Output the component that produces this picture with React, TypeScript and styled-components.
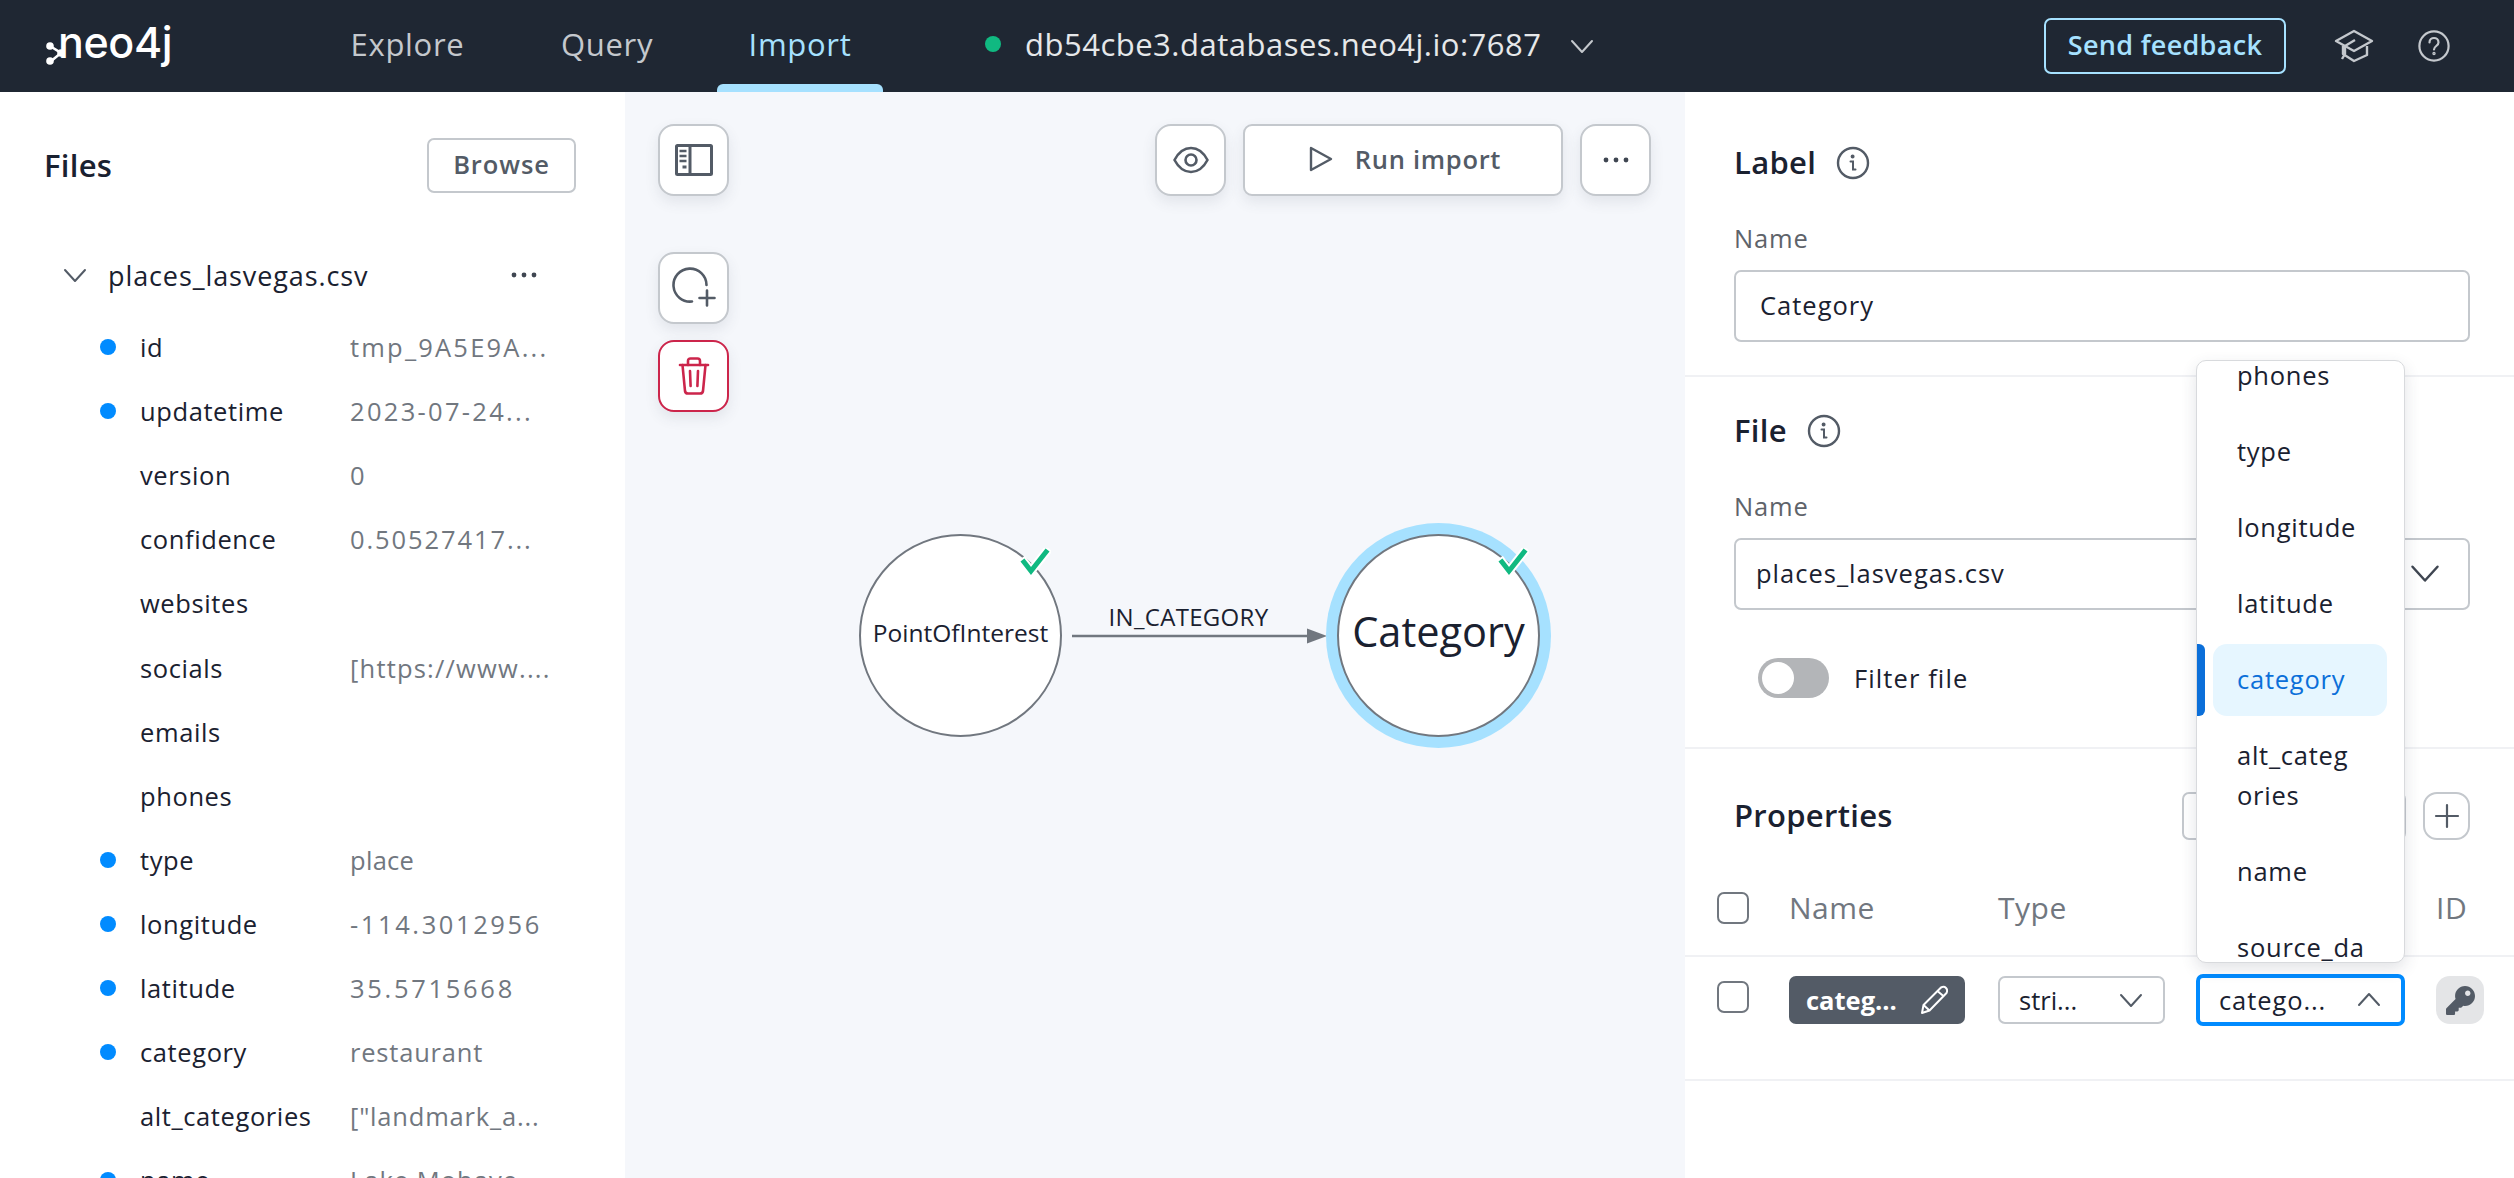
import styled, { createGlobalStyle } from 'styled-components';
import { FaKey } from 'react-icons/fa';

const FONT = '"Open Sans", "Noto Sans", sans-serif';

const GlobalStyle = createGlobalStyle`
  html, body {
    margin: 0;
    height: 100%;
    background: #fff;
  }
  body {
    font-family: ${FONT};
    color: #1a2130;
    overflow: hidden;
  }
  * {
    box-sizing: border-box;
  }
`;

const Page = styled.div`
  width: 2514px;
  height: 1178px;
  display: flex;
  flex-direction: column;
  overflow: hidden;
`;

// top bar
const Header = styled.header`
  height: 92px;
  flex: none;
  background: #1f2733;
  display: flex;
  align-items: center;
  padding-right: 64px;
`;

const LogoWrap = styled.div`
  width: 318px;
  padding-left: 45px;
  display: flex;
  align-items: center;
  color: #fff;
`;

const LogoMark = styled.svg`
  flex: none;
  margin-right: -9px;
  margin-top: 12px;
`;

const LogoText = styled.span`
  font-family: "Inter", sans-serif;
  font-size: 43px;
  line-height: 44px;
  font-weight: 500;
  letter-spacing: -0.4px;
  padding-bottom: 8px;
`;

const Nav = styled.nav`
  display: flex;
  align-items: stretch;
  height: 100%;
  gap: 32px;
`;

const NavItem = styled.a<{ $width: number; $active?: boolean }>`
  position: relative;
  width: ${({ $width }) => $width}px;
  display: flex;
  align-items: center;
  justify-content: center;
  padding-bottom: 5px;
  font-size: 31px;
  letter-spacing: 0.7px;
  color: ${({ $active }) => ($active ? '#a6e1ff' : '#c4c8cd')};

  ${({ $active }) => $active && `
    &::after {
      content: '';
      position: absolute;
      left: 0;
      right: 0;
      bottom: 0;
      height: 8px;
      background: #a6e1ff;
      border-radius: 6px 6px 0 0;
    }
  `}
`;

const Connection = styled.div`
  margin-left: 102px;
  display: flex;
  align-items: center;
  padding-bottom: 5px;
  font-size: 31px;
  letter-spacing: 0.5px;
  color: #e6e8ea;
`;

const StatusDot = styled.span`
  width: 16px;
  height: 16px;
  border-radius: 50%;
  background: #10b981;
  margin-right: 24px;
`;

const ConnChevron = styled.span`
  display: flex;
  margin-left: 28px;
  margin-top: 4px;
`;

const HeaderRight = styled.div`
  margin-left: auto;
  display: flex;
  align-items: center;
`;

const FeedbackButton = styled.button`
  width: 242px;
  height: 56px;
  border: 2.5px solid #a6e1ff;
  border-radius: 7px;
  background: transparent;
  color: #a6e1ff;
  font-family: ${FONT};
  font-size: 27px;
  font-weight: 600;
  letter-spacing: 0.3px;
  padding: 0 0 3px;
`;

const CapIcon = styled.svg`
  margin-left: 48px;
  display: block;
`;

const HelpIcon = styled.svg`
  margin-left: 44px;
  display: block;
`;

// main columns
const Main = styled.div`
  flex: 1;
  min-height: 0;
  display: flex;
`;

const FilesPanel = styled.aside`
  width: 625px;
  flex: none;
  padding: 46px 49px 0 44px;
  overflow: hidden;
`;

const FilesTitleRow = styled.div`
  display: flex;
  align-items: center;
  justify-content: space-between;
  height: 55px;
`;

const PanelTitle = styled.h2`
  margin: 0 0 2px;
  font-size: 31px;
  line-height: 32px;
  font-weight: 600;
  letter-spacing: 0.3px;
  color: #1a2130;
`;

const BrowseButton = styled.button`
  width: 149px;
  height: 55px;
  border: 2px solid #c4c8cd;
  border-radius: 7px;
  background: #fff;
  color: #535b66;
  font-family: ${FONT};
  font-size: 25.5px;
  font-weight: 600;
  letter-spacing: 0.9px;
  padding: 0 0 3px;
`;

const FileName = styled.div`
  margin-top: 50px;
  margin-bottom: 8px;
  height: 64px;
  display: flex;
  align-items: center;
  padding-left: 19px;
  font-size: 27px;
  font-weight: 500;
  letter-spacing: 0.9px;
`;

const FileNameText = styled.span`
  margin-left: 21px;
  flex: 1;
`;

const FileMenu = styled.span`
  display: flex;
  margin-right: 39px;
`;

const ColumnRow = styled.div`
  height: 64.1px;
  display: grid;
  grid-template-columns: 16px 234px 1fr;
  align-items: center;
  padding-left: 56px;
  font-size: 25.5px;
  white-space: nowrap;
`;

const MappedDot = styled.span<{ $on: boolean }>`
  width: 16px;
  height: 16px;
  border-radius: 50%;
  background: ${({ $on }) => ($on ? '#018bff' : 'transparent')};
`;

const ColumnName = styled.span`
  padding-left: 24px;
  letter-spacing: 0.6px;
  color: #1a2130;
`;

const ColumnValue = styled.span<{ $spread: number }>`
  letter-spacing: ${({ $spread }) => $spread}px;
  color: #71777f;
`;

// canvas
const Canvas = styled.section`
  position: relative;
  flex: 1;
  background: #f5f7fb;
  overflow: hidden;
`;

const ToolButton = styled.button<{ $danger?: boolean }>`
  width: 71px;
  height: 72px;
  padding: 0;
  display: flex;
  align-items: center;
  justify-content: center;
  background: #fff;
  border: 2px solid ${({ $danger }) => ($danger ? '#cc254b' : '#c4c8cd')};
  border-radius: 16px;
  box-shadow: 0 6px 14px rgba(60, 70, 90, 0.1);
`;

const LeftTools = styled.div`
  position: absolute;
  left: 33px;
  top: 32px;
  display: flex;
  flex-direction: column;
  align-items: flex-start;
`;

const ToolStack = styled.div`
  margin-top: 56px;
  display: flex;
  flex-direction: column;
  gap: 16px;
`;

const TopTools = styled.div`
  position: absolute;
  right: 34px;
  top: 32px;
  display: flex;
  gap: 17px;
`;

const RunButton = styled.button`
  width: 320px;
  height: 72px;
  padding: 0 0 3px 4px;
  display: flex;
  align-items: center;
  justify-content: center;
  gap: 22px;
  background: #fff;
  border: 2px solid #c4c8cd;
  border-radius: 9px;
  box-shadow: 0 6px 14px rgba(60, 70, 90, 0.1);
  color: #535b66;
  font-family: ${FONT};
  font-size: 25.5px;
  font-weight: 600;
  letter-spacing: 0.7px;
`;

const GraphNode = styled.div<{ $left: number; $selected?: boolean; $big?: boolean }>`
  position: absolute;
  left: ${({ $left }) => $left}px;
  top: 442px;
  width: 203px;
  height: 203px;
  border-radius: 50%;
  background: #fff;
  border: 2px solid #71777f;
  display: flex;
  align-items: center;
  justify-content: center;
  padding-bottom: ${({ $big }) => ($big ? '9px' : '7px')};
  font-size: ${({ $big }) => ($big ? '41.5px' : '24.5px')};
  color: #1a2130;
  white-space: nowrap;
  ${({ $selected }) => $selected && 'box-shadow: 0 0 0 11px #a6e1ff;'}
`;

const NodeCheck = styled.svg`
  position: absolute;
  right: 9px;
  top: 12px;
`;

const EdgeLine = styled.svg`
  position: absolute;
  left: 447px;
  top: 535px;
`;

const EdgeLabel = styled.span`
  position: absolute;
  left: 437px;
  width: 253px;
  top: 510px;
  line-height: 30px;
  text-align: center;
  font-size: 24px;
  letter-spacing: 0.3px;
  color: #1a2130;
`;

// right panel
const DetailsPanel = styled.aside`
  position: relative;
  width: 829px;
  flex: none;
  background: #fff;
  overflow: hidden;
`;

const Section = styled.div<{ $height: number; $top: number }>`
  height: ${({ $height }) => $height}px;
  padding: ${({ $top }) => $top}px 44px 0 49px;
  border-bottom: 2px solid #f0f1f4;
`;

const TitleRow = styled.div<{ $gap: number }>`
  display: flex;
  align-items: center;
  gap: ${({ $gap }) => $gap}px;
  height: 32px;
`;

const FieldLabel = styled.div`
  margin-top: 44px;
  margin-bottom: 17px;
  font-size: 25.5px;
  line-height: 30px;
  letter-spacing: 0.8px;
  color: #5e636a;
`;

const FieldBox = styled.div`
  height: 72px;
  border: 2px solid #c4c8cd;
  border-radius: 7px;
  display: flex;
  align-items: center;
  justify-content: space-between;
  padding-bottom: 2px;
  font-size: 25.5px;
  letter-spacing: 1px;
  color: #1a2130;
`;

const InputText = styled.span<{ $inset: number }>`
  padding-left: ${({ $inset }) => $inset}px;
`;

const SelectChevron = styled.span`
  display: flex;
  margin-right: 28px;
`;

const ToggleRow = styled.div`
  margin-top: 48px;
  margin-left: 24px;
  display: flex;
  align-items: center;
  gap: 25px;
  font-size: 25.5px;
  letter-spacing: 1.1px;
`;

const Toggle = styled.span`
  display: block;
  width: 71px;
  height: 40px;
  border-radius: 20px;
  background: #b3b5b8;
  padding: 4px;
`;

const ToggleKnob = styled.span`
  display: block;
  width: 32px;
  height: 32px;
  border-radius: 50%;
  background: #fff;
`;

const PropertiesHead = styled.div`
  display: flex;
  align-items: center;
  justify-content: space-between;
  height: 48px;
`;

const PropertiesTools = styled.div`
  display: flex;
  align-items: center;
  gap: 17px;
`;

const SearchBox = styled.div`
  width: 224px;
  height: 48px;
  border: 2px solid #c4c8cd;
  border-radius: 7px;
`;

const AddButton = styled.button`
  width: 47px;
  height: 48px;
  padding: 0;
  display: flex;
  align-items: center;
  justify-content: center;
  background: #fff;
  border: 2px solid #c4c8cd;
  border-radius: 14px;
`;

const TableGrid = styled.div`
  display: grid;
  grid-template-columns: 72px 209px 198px 240px 1fr;
  margin-left: -17px;
  margin-right: -44px;
`;

const TableHead = styled(TableGrid)`
  margin-top: 19px;
  height: 98px;
  align-items: center;
  border-bottom: 2px solid #f0f1f4;
  margin-left: -49px;
  padding-left: 32px;
  font-size: 30px;
  letter-spacing: 0.5px;
  color: #71777f;
`;

const TableRow = styled(TableGrid)`
  padding-top: 19px;
  height: 118px;
  align-items: start;
`;

const CheckBox = styled.span<{ $nudge?: number }>`
  display: block;
  width: 32px;
  height: 32px;
  border: 2px solid #71777f;
  border-radius: 7px;
  margin-top: ${({ $nudge }) => $nudge || 0}px;
`;

const NameChip = styled.div`
  width: 176px;
  height: 48px;
  border-radius: 7px;
  background: #535b66;
  color: #fff;
  display: flex;
  align-items: center;
  justify-content: space-between;
  padding: 0 17px;
  font-size: 25.5px;
  font-weight: 700;
`;

const SmallSelect = styled.div<{ $width: number; $focused?: boolean }>`
  width: ${({ $width }) => $width}px;
  height: ${({ $focused }) => ($focused ? '52px' : '48px')};
  margin-top: ${({ $focused }) => ($focused ? '-2px' : '0')};
  border: ${({ $focused }) => ($focused ? '4px solid #018bff' : '2px solid #c4c8cd')};
  border-radius: 7px;
  display: flex;
  align-items: center;
  justify-content: space-between;
  padding: 0 20px 0 19px;
  font-size: 25.5px;
  letter-spacing: ${({ $focused }) => ($focused ? '0.9px' : '0')};
  background: #fff;
`;

const KeyButton = styled.div`
  width: 48px;
  height: 48px;
  border-radius: 14px;
  background: #e4e5e7;
  color: #535b66;
  display: flex;
  align-items: center;
  justify-content: center;
`;

const Dropdown = styled.div`
  position: absolute;
  left: 511px;
  top: 268px;
  width: 209px;
  height: 603px;
  background: #fff;
  border: 1px solid #d8dadd;
  border-radius: 10px;
  box-shadow: 0 6px 16px rgba(50, 60, 80, 0.14);
  overflow: hidden;
`;

const OptionList = styled.div`
  margin-top: -21px;
  display: flex;
  flex-direction: column;
  gap: 4px;
`;

const Option = styled.div<{ $active?: boolean }>`
  position: relative;
  margin-left: 16px;
  width: 174px;
  min-height: 72px;
  padding: 15px 10px 17px 24px;
  line-height: 40px;
  font-size: 25.5px;
  letter-spacing: 0.75px;
  border-radius: 14px;
  color: ${({ $active }) => ($active ? '#0b6fd9' : '#1a2130')};
  background: ${({ $active }) => ($active ? '#e6f6ff' : 'transparent')};

  ${({ $active }) => $active && `
    &::before {
      content: '';
      position: absolute;
      left: -16px;
      top: 0;
      bottom: 0;
      width: 8px;
      background: #0b6fd9;
      border-radius: 0 6px 6px 0;
    }
  `}
`;

// the list wraps long names mid-word, so each name keeps its break point
const columnOptions = [
  ['phones'],
  ['type'],
  ['longitude'],
  ['latitude'],
  ['category'],
  ['alt_categ', 'ories'],
  ['name'],
  ['source_da', 'taset'],
];

const columns = [
  { name: 'id', value: 'tmp_9A5E9A...', mapped: true, spread: 2.2 },
  { name: 'updatetime', value: '2023-07-24...', mapped: true, spread: 2.3 },
  { name: 'version', value: '0', mapped: false, spread: 1 },
  { name: 'confidence', value: '0.50527417...', mapped: false, spread: 1.9 },
  { name: 'websites', value: '', mapped: false, spread: 0 },
  { name: 'socials', value: '[https://www....', mapped: false, spread: 1.2 },
  { name: 'emails', value: '', mapped: false, spread: 0 },
  { name: 'phones', value: '', mapped: false, spread: 0 },
  { name: 'type', value: 'place', mapped: true, spread: 0.3 },
  { name: 'longitude', value: '-114.3012956', mapped: true, spread: 2.6 },
  { name: 'latitude', value: '35.5715668', mapped: true, spread: 2.7 },
  { name: 'category', value: 'restaurant', mapped: true, spread: 0.8 },
  { name: 'alt_categories', value: '["landmark_a...', mapped: false, spread: 0.8 },
  { name: 'name', value: 'Lake Mohave ...', mapped: true, spread: 1 },
];

const Chevron = ({ up, size = 24, color = '#535b66' }: { up?: boolean; size?: number; color?: string }) => (
  <svg width={size} height={size} viewBox="0 0 24 24" fill="none" stroke={color} strokeWidth="2" strokeLinecap="round" strokeLinejoin="round">
    <path d={up ? 'M2 17L12 6l10 11' : 'M2 7l10 11L22 7'} />
  </svg>
);

const Dots = ({ color = '#3f4651' }: { color?: string }) => (
  <svg width="26" height="6" viewBox="0 0 26 6" fill={color}>
    <circle cx="3" cy="3" r="2.4" />
    <circle cx="13" cy="3" r="2.4" />
    <circle cx="23" cy="3" r="2.4" />
  </svg>
);

const InfoIcon = () => (
  <svg width="34" height="34" viewBox="0 0 34 34" fill="none" stroke="#535b66" strokeWidth="2.4" strokeLinecap="round">
    <circle cx="17" cy="17" r="15" />
    <path d="M14.5 15.5h2.5v8h2.5" strokeWidth="2" />
    <circle cx="16.6" cy="10.6" r="0.8" fill="#535b66" />
  </svg>
);

const Check = () => (
  <NodeCheck width="32" height="28" viewBox="0 0 32 28" fill="none" strokeLinecap="square">
    <path d="M5 14l7 9L27 4" stroke="#fff" strokeWidth="9" />
    <path d="M5 14l7 9L27 4" stroke="#10b981" strokeWidth="5" />
  </NodeCheck>
);

const App = () => {
  return (
    <Page>
      <GlobalStyle />
      <Header>
        <LogoWrap>
          <LogoMark width="22" height="30" viewBox="0 0 22 30" fill="none" stroke="#fff" strokeWidth="2.6">
            <path d="M5 9l11 7-11 9" />
            <circle cx="5" cy="9" r="3.8" fill="#fff" stroke="none" />
            <circle cx="5" cy="24" r="3.8" fill="#fff" stroke="none" />
            <circle cx="16" cy="16" r="3.8" fill="#fff" stroke="none" />
          </LogoMark>
          <LogoText>neo4j</LogoText>
        </LogoWrap>
        <Nav>
          <NavItem $width={179}>Explore</NavItem>
          <NavItem $width={156}>Query</NavItem>
          <NavItem $width={166} $active>Import</NavItem>
        </Nav>
        <Connection>
          <StatusDot />
          db54cbe3.databases.neo4j.io:7687
          <ConnChevron>
            <Chevron color="#c4c8cd" />
          </ConnChevron>
        </Connection>
        <HeaderRight>
          <FeedbackButton>Send feedback</FeedbackButton>
          <CapIcon width="40" height="36" viewBox="0 0 40 36" fill="none" stroke="#c4c8cd" strokeWidth="2.4" strokeLinejoin="round">
            <path d="M20 3l18 10-18 10L2 13z" />
            <path d="M9 18v8l11 7 13-6v-9" />
            <path d="M21 12l-10 6v8l-3 5" />
          </CapIcon>
          <HelpIcon width="32" height="32" viewBox="0 0 32 32" fill="none" stroke="#c4c8cd" strokeWidth="2.2" strokeLinecap="round">
            <circle cx="16" cy="16" r="14.6" />
            <path d="M11.5 12.5c0-6 9-6 9 0 0 3.500-4.500 3.500-4.500 7" />
            <circle cx="16" cy="23.500" r="0.6" fill="#c4c8cd" />
          </HelpIcon>
        </HeaderRight>
      </Header>

      <Main>
        <FilesPanel>
          <FilesTitleRow>
            <PanelTitle>Files</PanelTitle>
            <BrowseButton>Browse</BrowseButton>
          </FilesTitleRow>
          <FileName>
            <Chevron color="#535b66" />
            <FileNameText>places_lasvegas.csv</FileNameText>
            <FileMenu><Dots /></FileMenu>
          </FileName>
          {columns.map((c) => (
            <ColumnRow key={c.name}>
              <MappedDot $on={c.mapped} />
              <ColumnName>{c.name}</ColumnName>
              <ColumnValue $spread={c.spread}>{c.value}</ColumnValue>
            </ColumnRow>
          ))}
        </FilesPanel>

        <Canvas>
          <LeftTools>
            <ToolButton>
              <svg width="38" height="32" viewBox="0 0 38 32" fill="none" stroke="#535b66" strokeWidth="3">
                <rect x="1.500" y="1.500" width="35" height="29" rx="1" />
                <path d="M15 1.500v29" />
                <path d="M4.500 7h7M4.500 12h7M4.500 17h7" strokeWidth="2.400" />
                <path d="M7.500 23h4" strokeWidth="3" />
              </svg>
            </ToolButton>
            <ToolStack>
              <ToolButton>
                <svg width="44" height="44" viewBox="0 0 44 44" fill="none" stroke="#535b66" strokeWidth="2.600" strokeLinecap="round">
                  <path d="M34.500 19A16.500 16.500 0 1 0 20 35.500" />
                  <path d="M35 24.500v15M27.500 32h15" />
                </svg>
              </ToolButton>
              <ToolButton $danger>
                <svg width="32" height="38" viewBox="0 0 32 38" fill="none" stroke="#cc254b" strokeWidth="2.600" strokeLinecap="round" strokeLinejoin="round">
                  <path d="M2 8h28" />
                  <path d="M10 8V4q0-2.500 2.500-2.500h7Q22 1.500 22 4v4" />
                  <path d="M4.500 8l2.500 26q.3 2.500 3 2.500h12q2.700 0 3-2.500L27.500 8" />
                  <path d="M12 14l.6 15M20 14l-.6 15" />
                </svg>
              </ToolButton>
            </ToolStack>
          </LeftTools>

          <TopTools>
            <ToolButton>
              <svg width="36" height="28" viewBox="0 0 36 28" fill="none" stroke="#535b66" strokeWidth="2.600">
                <path d="M1.500 14C6 5.500 12 2 18 2s12 3.500 16.500 12C30 22.500 24 26 18 26S6 22.500 1.500 14z" strokeLinejoin="round" />
                <circle cx="18" cy="14" r="5.500" />
              </svg>
            </ToolButton>
            <RunButton>
              <svg width="24" height="26" viewBox="0 0 24 26" fill="none" stroke="#535b66" strokeWidth="2.400" strokeLinejoin="round">
                <path d="M2 2l20 11L2 24z" />
              </svg>
              Run import
            </RunButton>
            <ToolButton>
              <Dots />
            </ToolButton>
          </TopTools>

          <GraphNode $left={234}>
            PointOfInterest
            <Check />
          </GraphNode>
          <EdgeLabel>IN_CATEGORY</EdgeLabel>
          <EdgeLine width="258" height="20" viewBox="0 0 258 20">
            <path d="M0 9h238" stroke="#71777f" strokeWidth="2.400" />
            <path d="M235 1.500L255 9l-20 7.500z" fill="#71777f" />
          </EdgeLine>
          <GraphNode $left={712} $selected $big>
            Category
            <Check />
          </GraphNode>
        </Canvas>

        <DetailsPanel>
          <Section $height={285} $top={55}>
            <TitleRow $gap={20}>
              <PanelTitle>Label</PanelTitle>
              <InfoIcon />
            </TitleRow>
            <FieldLabel>Name</FieldLabel>
            <FieldBox>
              <InputText $inset={24}>Category</InputText>
            </FieldBox>
          </Section>
          <Section $height={372} $top={38}>
            <TitleRow $gap={20}>
              <PanelTitle>File</PanelTitle>
              <InfoIcon />
            </TitleRow>
            <FieldLabel>Name</FieldLabel>
            <FieldBox>
              <InputText $inset={20}>places_lasvegas.csv</InputText>
              <SelectChevron>
                <Chevron color="#3f4651" size={30} />
              </SelectChevron>
            </FieldBox>
            <ToggleRow>
              <Toggle><ToggleKnob /></Toggle>
              Filter file
            </ToggleRow>
          </Section>
          <Section $height={332} $top={43}>
            <PropertiesHead>
              <PanelTitle>Properties</PanelTitle>
              <PropertiesTools>
                <SearchBox />
                <AddButton>
                  <svg width="26" height="26" viewBox="0 0 26 26" stroke="#535b66" strokeWidth="2.200" strokeLinecap="round">
                    <path d="M13 2v22M2 13h22" />
                  </svg>
                </AddButton>
              </PropertiesTools>
            </PropertiesHead>
            <TableHead>
              <CheckBox $nudge={2} />
              <span>Name</span>
              <span>Type</span>
              <span />
              <span>ID</span>
            </TableHead>
            <TableRow>
              <CheckBox $nudge={5} />
              <NameChip>
                categ...
                <svg width="28" height="30" viewBox="0 0 28 30" fill="none" stroke="#fff" strokeWidth="2" strokeLinejoin="round">
                  <path d="M21 2.500q3-1.500 5 .5t.5 5L9.500 25.500 2 28l1.500-8z" />
                  <path d="M18 6.500l6 5M3.500 20l6 5.500" />
                </svg>
              </NameChip>
              <SmallSelect $width={167}>
                stri...
                <Chevron />
              </SmallSelect>
              <SmallSelect $width={209} $focused>
                catego...
                <Chevron up />
              </SmallSelect>
              <KeyButton>
                <FaKey size={29} />
              </KeyButton>
            </TableRow>
          </Section>

          <Dropdown>
            <OptionList>
              {columnOptions.map((parts) => (
                <Option key={parts[0]} $active={parts[0] === 'category'}>
                  {parts[0]}
                  {parts[1] && <><wbr />{parts[1]}</>}
                </Option>
              ))}
            </OptionList>
          </Dropdown>
        </DetailsPanel>
      </Main>
    </Page>
  );
};

export default App;
